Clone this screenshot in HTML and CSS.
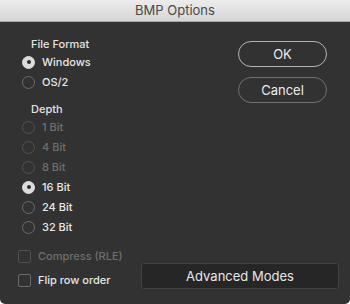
FILE: index.html
```html
<!DOCTYPE html>
<html lang="en">
<head>
    <meta charset="UTF-8">
    <title>BMP Options</title>
    <link rel="stylesheet" href="styles.css">
</head>
<body>

<div class="dialog">
    <div class="titlebar">BMP Options</div>

    <div class="content">
        <div class="main">
            <div class="options">
                <!-- File Format -->
                <div class="group-label">File Format</div>
                <div class="radio-row">
                    <span class="radio checked"></span>
                    <span>Windows</span>
                </div>
                <div class="radio-row">
                    <span class="radio"></span>
                    <span>OS/2</span>
                </div>

                <!-- Depth -->
                <div class="group-label depth">Depth</div>
                <div class="radio-row disabled">
                    <span class="radio"></span>
                    <span>1 Bit</span>
                </div>
                <div class="radio-row disabled">
                    <span class="radio"></span>
                    <span>4 Bit</span>
                </div>
                <div class="radio-row disabled">
                    <span class="radio"></span>
                    <span>8 Bit</span>
                </div>
                <div class="radio-row">
                    <span class="radio checked"></span>
                    <span>16 Bit</span>
                </div>
                <div class="radio-row">
                    <span class="radio"></span>
                    <span>24 Bit</span>
                </div>
                <div class="radio-row">
                    <span class="radio"></span>
                    <span>32 Bit</span>
                </div>
            </div>

            <div class="actions">
                <button class="pill primary">OK</button>
                <button class="pill">Cancel</button>
            </div>
        </div>

        <div class="footer">
            <div class="checks">
                <div class="check-row disabled">
                    <span class="checkbox"></span>
                    <span>Compress (RLE)</span>
                </div>
                <div class="check-row">
                    <span class="checkbox"></span>
                    <span>Flip row order</span>
                </div>
            </div>
            <button class="advanced">Advanced Modes</button>
        </div>
    </div>
</div>

</body>
</html>
```

FILE: styles.css
```css
body {
    margin: 0;
    background: #ffffff;
    font-family: "Inter", "Liberation Sans", Arial, sans-serif;
}

.dialog {
    width: 350px;
    height: 304px;
    display: flex;
    flex-direction: column;
    background: #323232;
    border-radius: 0 0 5px 5px;
    overflow: hidden;
}

.titlebar {
    height: 21px;
    line-height: 21px;
    text-align: center;
    font-size: 13px;
    color: #4a4a4a;
    background: linear-gradient(#ececec, #d6d6d6);
    border-bottom: 1px solid #a9a9a9;
}

.content {
    flex: 1;
    padding: 14px 11px 0 22px;
}

.main {
    display: flex;
    justify-content: space-between;
}

/* levý sloupec s volbami */
.options {
    display: flex;
    flex-direction: column;
}

.group-label {
    height: 16px;
    line-height: 16px;
    margin-left: 9px;
    font-size: 11px;
    font-weight: 500;
    color: #e2e2e2;
}

.group-label.depth {
    margin-top: 9px;
}

.radio-row, .check-row {
    display: flex;
    align-items: center;
    gap: 7px;
    height: 20px;
    font-size: 11px;
    font-weight: 500;
    color: #e6e6e6;
}

.radio {
    width: 11px;
    height: 11px;
    border: 1px solid #6c6c6c;
    border-radius: 50%;
    position: relative;
}

.radio.checked {
    background: #dcdcdc;
    border-color: #dcdcdc;
}

.radio.checked::after {
    content: "";
    position: absolute;
    left: 3.5px;
    top: 3.5px;
    width: 4px;
    height: 4px;
    border-radius: 50%;
    background: #2e2e2e;
}

.disabled {
    color: #6f6f6f;
}

.disabled .radio {
    border-color: #525252;
}

/* tlačítka vpravo */
.actions {
    display: flex;
    flex-direction: column;
    gap: 10px;
    margin-top: 5px;
    margin-right: 12px;
}

.pill {
    width: 89px;
    height: 26px;
    border-radius: 13px;
    border: 1px solid #707070;
    background: transparent;
    color: #ececec;
    font-family: inherit;
    font-size: 13px;
    padding: 0;
}

.pill.primary {
    border-color: #b4b4b4;
}

.footer {
    display: flex;
    justify-content: space-between;
    align-items: flex-end;
    margin-top: 7px;
}

.checks {
    display: flex;
    flex-direction: column;
    margin-left: -4px;
}

.check-row {
    height: 24px;
}

.checkbox {
    width: 11px;
    height: 11px;
    border: 1px solid #6c6c6c;
    border-radius: 2px;
}

.check-row.disabled .checkbox {
    border-color: #505050;
}

.advanced {
    width: 198px;
    height: 26px;
    margin-bottom: 3px;
    background: #262626;
    border: 1px solid #414141;
    border-radius: 3px;
    color: #e6e6e6;
    font-family: inherit;
    font-size: 13px;
    padding: 0;
}
```
